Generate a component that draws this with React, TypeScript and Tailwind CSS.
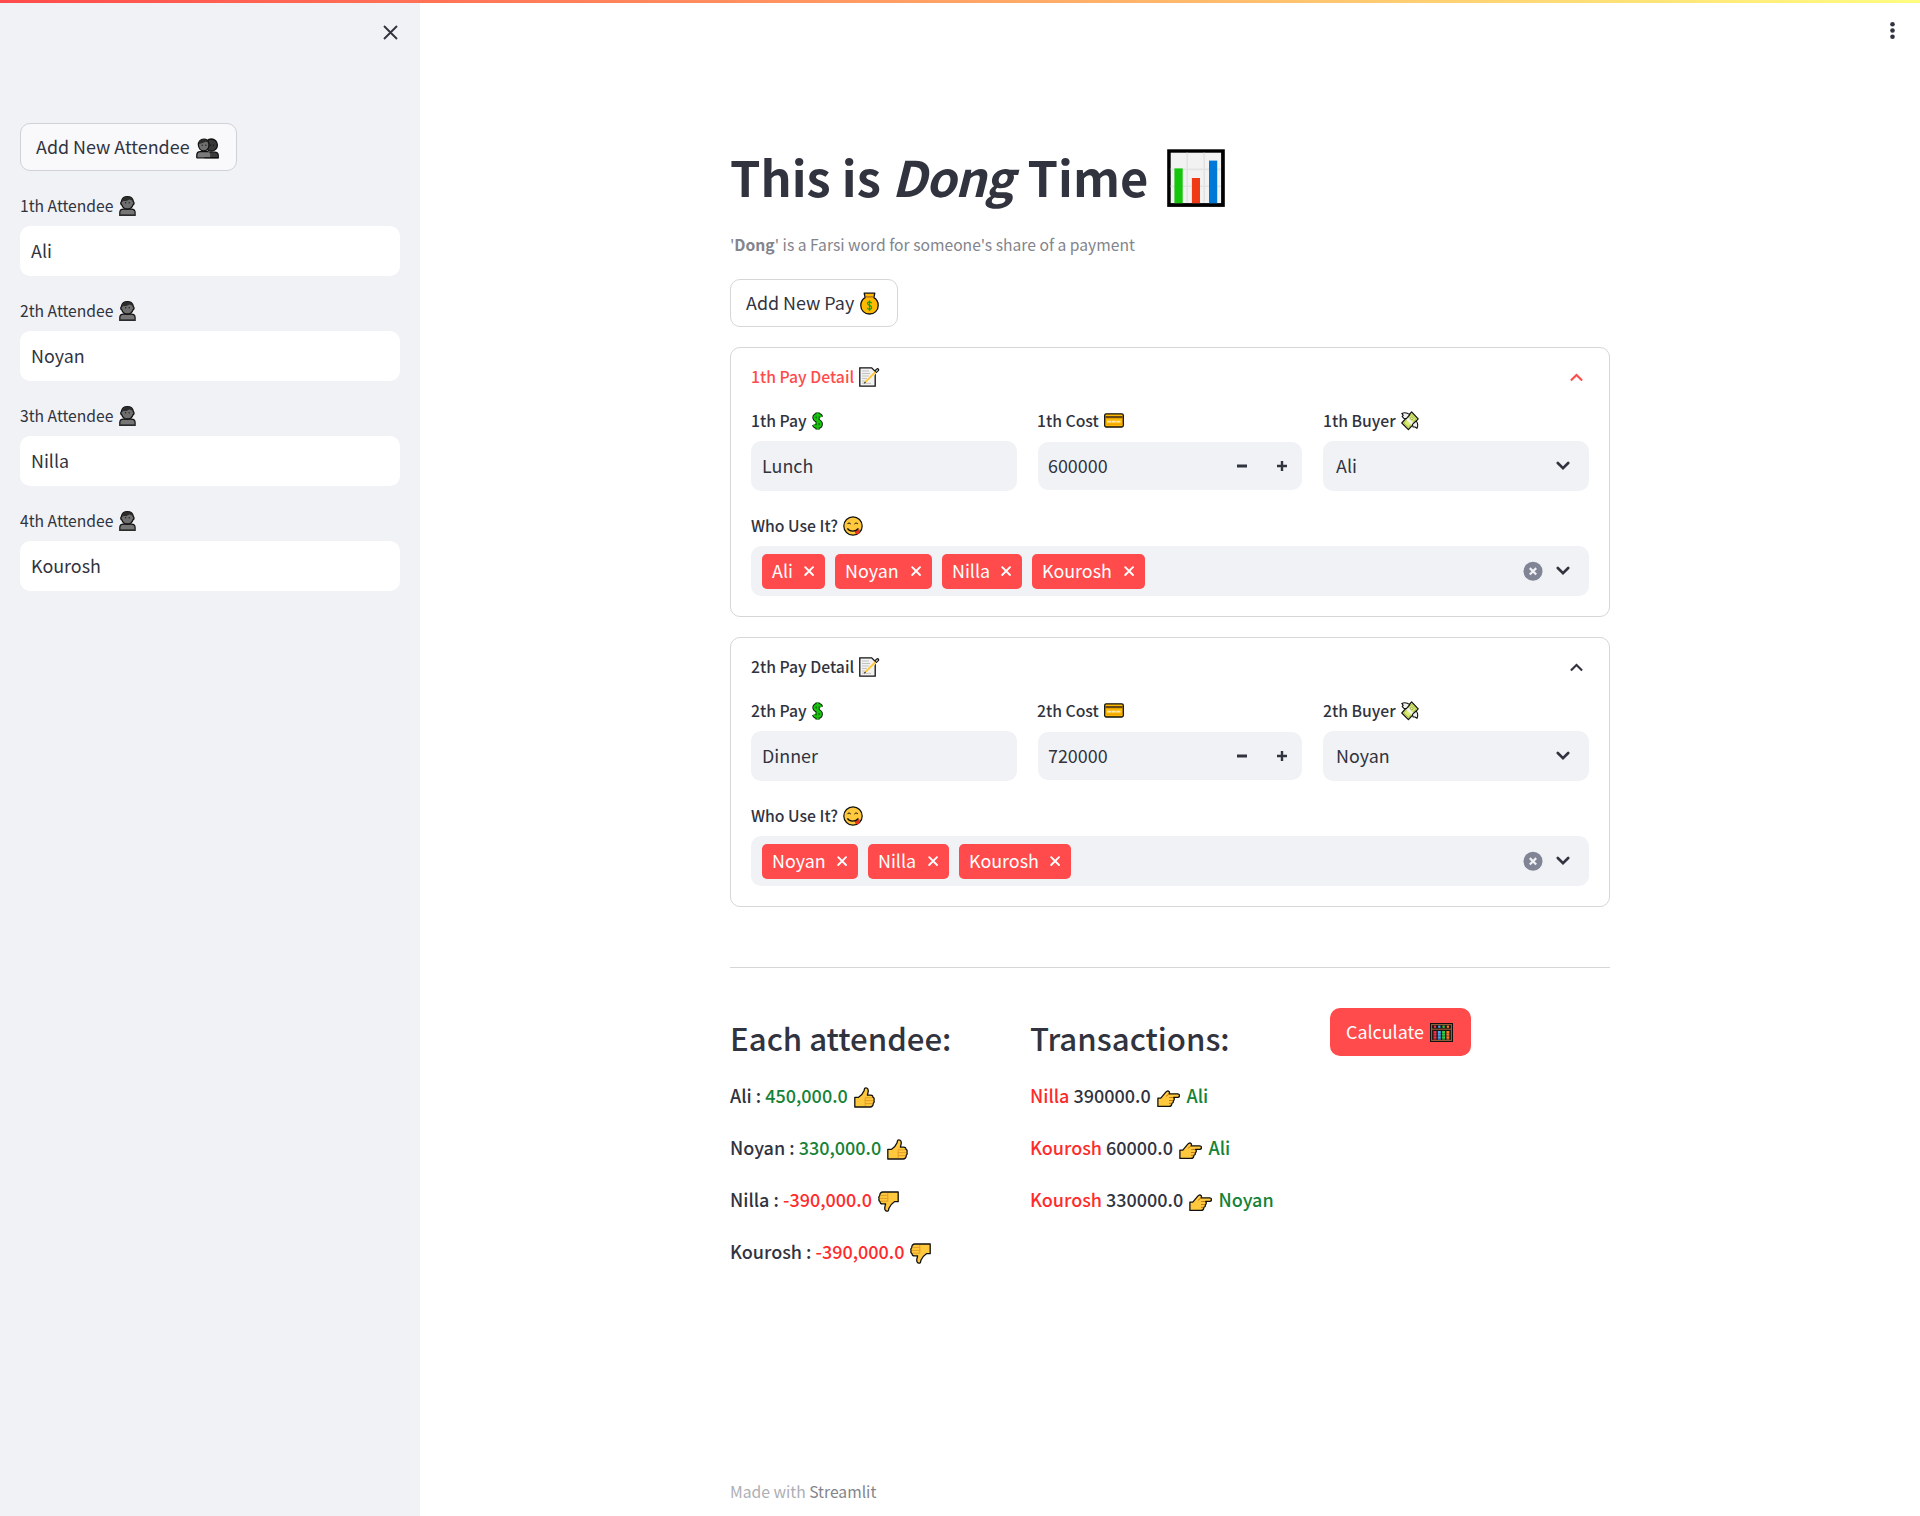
import type { ReactNode } from "react";

const CONTROL = "bg-[#f0f2f6] rounded-[10px]";

function PersonIcon() {
  return (
    <svg width="17" height="20" viewBox="0 0 17 20" className="shrink-0">
      <path d="M.8 19.4V16.4C.8 14.2 2.2 13.1 4.4 13.1H12.4C14.6 13.1 16.1 14.2 16.1 16.4V19.4Z" fill="#767676" stroke="#111" strokeWidth="1.2" />
      <path d="M1 19.1H16" stroke="#333" strokeWidth="1.4" />
      <path d="M2.4 5.6C3 2.4 5.4.7 8.4.7S13.8 2.4 14.4 5.6C15.4 6.6 15.2 8.2 14 8.9 13.2 11.4 11 13 8.4 13S3.6 11.4 2.8 8.9C1.6 8.2 1.4 6.6 2.4 5.6Z" fill="#6f6f6f" stroke="#111" strokeWidth="1.3" />
      <path d="M2.8 6C3 2.8 5 .8 8.4 .8S13.8 2.8 14 6L12.6 4.2 10.4 3.4 7.4 4.9 4.4 4.9Z" fill="#2c2c2c" />
      <circle cx="6.6" cy="6.7" r=".7" fill="#222" />
      <circle cx="10.2" cy="6.7" r=".7" fill="#222" />
    </svg>
  );
}

function PeopleIcon() {
  return (
    <svg width="23" height="21" viewBox="0 0 23 21" className="shrink-0">
      <path d="M9 19.6V14.2H18.6C21 14.2 22.3 15.5 22.3 17.4V19.6Z" fill="#3b3b3b" stroke="#111" strokeWidth="1.2" />
      <circle cx="15.3" cy="7.1" r="6.1" fill="#383838" stroke="#111" strokeWidth="1.3" />
      <path d="M.8 19.6V17.3C.8 15 2 13.8 4.2 13.8H11.4C13 13.8 14.2 15 14.2 17V19.6Z" fill="#7a7a7a" />
      <path d="M.8 20V17.3C.8 15 2 13.6 4.2 13.6H12.4M.6 19.8H22.6" fill="none" stroke="#111" strokeWidth="1.3" />
      <path d="M2.4 7C2.2 3.6 4.4 1.2 7.8 1.2S12.6 2.8 13 6.4C13.2 10.2 11 12.9 7.8 12.9S2.6 10.2 2.4 7Z" fill="#707070" stroke="#111" strokeWidth="1.3" />
      <path d="M2.8 6C3 3 5 1.2 8 1.2 10.4 1.2 12 2.5 12.7 4.8L9.4 3.8 6.8 4.9Z" fill="#2c2c2c" />
      <circle cx="6.2" cy="7.2" r=".7" fill="#222" />
      <circle cx="9.8" cy="7.2" r=".7" fill="#222" />
      <circle cx="14.6" cy="7.2" r=".6" fill="#111" />
      <circle cx="17.4" cy="7.2" r=".6" fill="#111" />
    </svg>
  );
}

function ChartIcon() {
  return (
    <svg width="58" height="58" viewBox="0 0 58 58" className="shrink-0">
      <rect x=".2" y=".3" width="57.6" height="57.6" fill="#000" />
      <rect x="3.7" y="3.7" width="50.4" height="50.4" fill="#f2f2f2" />
      <path d="M20.2 3.7V54M37.2 3.7V54M3.7 20.4H54M3.7 37.3H54" stroke="#e3e3e3" strokeWidth="1.6" />
      <rect x="7.4" y="19.4" width="8.3" height="34.8" fill="#16c60c" />
      <rect x="24.9" y="29" width="8.1" height="25.2" fill="#f03a17" />
      <rect x="42" y="11.6" width="8.2" height="42.6" fill="#0078d7" />
    </svg>
  );
}

function MoneyBagIcon() {
  return (
    <svg width="19" height="23" viewBox="0 0 19 23" className="shrink-0">
      <path d="M4.2 1.2H14.8L13.9 5.6C16.6 7.2 18.2 10 18.2 13.4 18.2 18.6 14.4 22 9.5 22S.8 18.6.8 13.4C.8 10 2.4 7.2 5.1 5.6Z" fill="#ffb900" stroke="#111" strokeWidth="1.3" strokeLinejoin="round" />
      <path d="M4.9 4.9H14.1" stroke="#8e562e" strokeWidth="1" />
      <path d="M11.6 11.2C11.2 10.3 10.5 9.9 9.6 9.9 8.4 9.9 7.5 10.5 7.5 11.6 7.5 13.9 11.6 12.9 11.6 15.5 11.6 16.7 10.7 17.3 9.5 17.3 8.3 17.3 7.6 16.8 7.3 15.9M9.5 8.4V18.9" fill="none" stroke="#10a010" strokeWidth="1.2" />
    </svg>
  );
}

function MemoIcon() {
  return (
    <svg width="21" height="20" viewBox="0 0 21 20" className="shrink-0">
      <path d="M.8.8H12.7L16.2 4.4V19.2H.8Z" fill="#f2f2f2" stroke="#111" strokeWidth="1.3" />
      <path d="M3 4H10M3 6.5H11M3 9H10M3 11.5H8M3 14H7M3 16.3H12" stroke="#bcbcbc" strokeWidth=".9" />
      <path d="M17 4.2 18.6 2.8" stroke="#111" strokeWidth="3.4" strokeLinecap="round" />
      <path d="M17.4 4 18.4 3" stroke="#bbb" strokeWidth="1.4" strokeLinecap="round" />
      <path d="M6.4 15.2 16 5.4" stroke="#fff" strokeWidth="3" />
      <path d="M6.2 15.3 16.4 5" stroke="#ffc83d" strokeWidth="2" />
      <path d="M5.2 16.3 6.6 15" stroke="#444" strokeWidth="1.2" />
    </svg>
  );
}

function DollarIcon() {
  const s = "M9 6.1C8.6 4.6 7.3 3.9 5.7 3.9 3.8 3.9 2.4 4.9 2.4 6.6 2.4 10.6 8.8 8.8 8.8 13 8.8 14.9 7.4 15.9 5.5 15.9 3.8 15.9 2.5 15.2 2 13.7M5.6 1.5V18.5";
  return (
    <svg width="12" height="20" viewBox="0 0 12 20" className="shrink-0">
      <path d={s} fill="none" stroke="#111" strokeWidth="4.2" />
      <path d={s} fill="none" stroke="#16c60c" strokeWidth="2.3" />
    </svg>
  );
}

function CardIcon() {
  return (
    <svg width="20" height="15" viewBox="0 0 20 15" className="shrink-0">
      <rect x=".7" y=".8" width="18.6" height="13.2" rx="1.5" fill="#ffb900" stroke="#111" strokeWidth="1.3" />
      <rect x="1.4" y="3" width="17.2" height="2.2" fill="#6b4a12" />
      <path d="M3 8.7H17" stroke="#ffe9b0" strokeWidth="1.8" strokeDasharray="4 .6" />
      <path d="M1.4 11.2H18.6" stroke="#e8a000" strokeWidth="1" />
    </svg>
  );
}

function WingedMoneyIcon() {
  return (
    <svg width="18" height="20" viewBox="0 0 18 20" className="shrink-0">
      <path d="M10.6.9 17.2 7.8 7.4 18.7.8 12Z" fill="#d8ea70" stroke="#111" strokeWidth="1.2" strokeLinejoin="round" />
      <path d="M10.5 3 15.2 7.8 7.5 16.4 2.9 11.9Z" fill="none" stroke="#9cb64a" strokeWidth=".8" />
      <path d="M5.2 6.5 11.9 13.4" stroke="#f4f4e6" strokeWidth="2.8" />
      <path d="M.8 2.4C3 1.4 6.4 1.8 8.8 3.6L5.4 7.6 2.6 7.2 1.2 5.4 2.2 4.4Z" fill="#f2f2f2" stroke="#111" strokeWidth="1.1" strokeLinejoin="round" />
      <path d="M11.4 13.4 15.2 10C17 12.2 17 15 16 17.4L14 16 12 16Z" fill="#f2f2f2" stroke="#111" strokeWidth="1.1" strokeLinejoin="round" />
      <circle cx="10.8" cy="7.4" r="1.3" fill="#f2f7c4" stroke="#7d962f" strokeWidth=".7" />
    </svg>
  );
}

function YumIcon() {
  return (
    <svg width="20" height="20" viewBox="0 0 20 20" className="shrink-0">
      <circle cx="10" cy="10" r="9.2" fill="#ffc83d" stroke="#111" strokeWidth="1.2" />
      <path d="M4.3 8.1C5 6.7 7 6.7 7.8 8.1M11.4 8.1C12.2 6.7 14.2 6.7 15 8.1" fill="none" stroke="#111" strokeWidth="1" />
      <path d="M11.8 15C12.8 13.8 14.8 12.8 16.6 13.4 17.1 15.6 16.4 18 14.4 18.3 12.6 18.4 11.8 17 11.8 15Z" fill="#e8351b" />
      <path d="M4.4 12.4C6.4 15.8 12.6 16.2 15.4 12.4" fill="none" stroke="#111" strokeWidth="1.2" />
    </svg>
  );
}

function ThumbIcon({ down = false }: { down?: boolean }) {
  return (
    <svg width="21" height="21" viewBox="0 0 21 21" className={down ? "shrink-0 rotate-180" : "shrink-0"}>
      <path d="M.8 20V10.3H4.6C7.2 8.6 9 6.6 10.2 3.6 10.2 1.6 10.8.8 12 .8 13.8.8 14.4 2.6 14.2 4.6L13.4 8.1H16.6C18.4 8.1 19 9.1 18.8 10.2 20 10.8 20.4 12 19.9 13.2 20.4 14.4 20.2 15.6 19.2 16.3 19.4 18.6 18 20 16 20Z" fill="#ffc83d" stroke="#111" strokeWidth="1.3" strokeLinejoin="round" />
      <path d="M11.2 10.8H18.3M10.7 13.6H19.2M11.2 16.6H18.5M11.2 10.5V19" fill="none" stroke="#e09a25" strokeWidth=".9" />
    </svg>
  );
}

function PointIcon() {
  return (
    <svg width="23" height="18" viewBox="0 0 23 18" className="shrink-0">
      <path d="M.9 16.4V8.1H3.8L8.8 2.2C9.6 1 11 .6 12 1.4 12.6 2 12.6 2.8 12.2 3.8H20.8C23 3.8 23 7.4 20.8 7.4H16.6C17.8 8.8 17.4 10.2 16.2 10.8 16.6 12.2 16 13.2 14.8 13.4 14.8 15.4 13.8 16.4 12 16.4Z" fill="#ffc83d" stroke="#111" strokeWidth="1.3" strokeLinejoin="round" />
      <path d="M12.2 3.9 9 6.4M12.2 7.5H16M12 10.5H15.8M12 13.3H14.4" stroke="#c27a12" strokeWidth="1" />
    </svg>
  );
}

function AbacusIcon() {
  return (
    <svg width="23" height="19" viewBox="0 0 23 19" className="shrink-0">
      <rect width="23" height="19" fill="#111" />
      <rect x="1.6" y="1.6" width="19.8" height="15.8" fill="#1c1410" stroke="#a0683c" strokeWidth="1" />
      <path d="M2 6.2H21" stroke="#a0683c" strokeWidth="1" />
      <g fill="none" strokeWidth="3" strokeDasharray="2.2 .4">
        <path d="M5 8V16.6" stroke="#f0304a" />
        <path d="M9.3 8V16.6" stroke="#45a8f5" />
        <path d="M13.6 8V16.6" stroke="#2fd040" />
        <path d="M17.9 8V16.6" stroke="#ff7a28" />
      </g>
      <g strokeWidth="2.2">
        <path d="M5 2.6V4.8" stroke="#f0304a" />
        <path d="M9.3 2.6V4.8" stroke="#45a8f5" />
        <path d="M13.6 2.6V4.8" stroke="#2fd040" />
        <path d="M17.9 2.6V4.8" stroke="#ff7a28" />
      </g>
    </svg>
  );
}

function Chevron({ up = false }: { up?: boolean }) {
  return up ? (
    <svg width="14" height="9" viewBox="0 0 14 9" className="shrink-0">
      <path d="M1.9 7.6 7.5 2 13.1 7.6" fill="none" stroke="currentColor" strokeWidth="2.1" />
    </svg>
  ) : (
    <svg width="14" height="10" viewBox="0 0 14 10" className="shrink-0">
      <path d="M1.8 2 7 7.2 12.2 2" fill="none" stroke="#31333f" strokeWidth="2.6" strokeLinecap="round" />
    </svg>
  );
}

function Attendee({ n, name }: { n: number; name: string }) {
  return (
    <div className="mb-[21px] flex flex-col">
      <div className="mb-[7px] flex h-[27px] items-center text-[15.67px]">
        <span className="w-[99px] whitespace-nowrap">{n}th Attendee</span>
        <span className="mt-px"><PersonIcon /></span>
      </div>
      <div className="flex h-[50px] items-center rounded-[10px] bg-white px-[11px]">{name}</div>
    </div>
  );
}

function FieldLabel({ text, width, icon }: { text: string; width: string; icon: ReactNode }) {
  return (
    <div className="mb-[7px] flex h-[27px] items-center text-[15.75px] font-medium">
      <span className={`${width} whitespace-nowrap`}>{text}</span>
      {icon}
    </div>
  );
}

type Person = { name: string; width: string };
type Pay = { n: number; item: string; cost: string; buyer: string; users: Person[]; active?: boolean };

function PayCard({ n, item, cost, buyer, users, active }: Pay) {
  return (
    <section className="mb-5 flex h-[270px] flex-col rounded-[10px] border border-[#d6d6d9] px-5 pt-[15px]">
      <div className={`mb-[17px] flex h-[27px] items-center text-[15.75px] font-medium ${active ? "text-[#ff4b4b]" : ""}`}>
        <span className="w-[108px] whitespace-nowrap">{n}th Pay Detail</span>
        <MemoIcon />
        <span className="ml-auto mr-[6px] mt-0.5"><Chevron up /></span>
      </div>
      <div className="mb-[21px] grid grid-cols-3 gap-5">
        <div>
          <FieldLabel text={`${n}th Pay`} width="w-[61px]" icon={<DollarIcon />} />
          <div className={`${CONTROL} flex h-[50px] items-center px-[11px]`}>{item}</div>
        </div>
        <div>
          <FieldLabel text={`${n}th Cost`} width="w-[67px]" icon={<CardIcon />} />
          <div className={`${CONTROL} mx-px mt-2 flex h-12 items-center pl-[10px] pr-3.5`}>
            <span className="grow">{cost}</span>
            <svg width="12" height="12" viewBox="0 0 12 12" className="mr-7">
              <path d="M1 6H11" stroke="#31333f" strokeWidth="3" />
            </svg>
            <svg width="12" height="12" viewBox="0 0 12 12">
              <path d="M1 6H11M6 1V11" stroke="#31333f" strokeWidth="2.4" />
            </svg>
          </div>
        </div>
        <div>
          <FieldLabel text={`${n}th Buyer`} width="w-[78px]" icon={<WingedMoneyIcon />} />
          <div className={`${CONTROL} flex h-[50px] items-center justify-between pl-[13px] pr-[19px]`}>
            {buyer}
            <Chevron />
          </div>
        </div>
      </div>
      <FieldLabel text="Who Use It?" width="w-[92px]" icon={<YumIcon />} />
      <div className={`${CONTROL} flex h-[50px] items-center pl-[11px] pr-[19px]`}>
        <div className="flex grow gap-2.5">
          {users.map((u) => (
            <span key={u.name} className={`${u.width} flex h-[35px] items-center justify-between rounded-[5px] bg-[#ff4b4b] px-2.5 text-white`}>
              {u.name}
              <svg width="12" height="12" viewBox="0 0 12 12">
                <path d="M2.2 2.2 10 10M10 2.2 2.2 10" stroke="white" strokeWidth="1.9" strokeLinecap="round" />
              </svg>
            </span>
          ))}
        </div>
        <svg width="20" height="20" viewBox="0 0 20 20" className="mr-[13px]">
          <circle cx="10" cy="10.3" r="9.5" fill="#808495" />
          <path d="M6.8 7.1 13.2 13.5M13.2 7.1 6.8 13.5" stroke="#f0f2f6" strokeWidth="2.2" />
        </svg>
        <Chevron />
      </div>
    </section>
  );
}

const pays: Pay[] = [
  {
    n: 1, item: "Lunch", cost: "600000", buyer: "Ali", active: true,
    users: [
      { name: "Ali", width: "w-[63px]" },
      { name: "Noyan", width: "w-[97px]" },
      { name: "Nilla", width: "w-[80px]" },
      { name: "Kourosh", width: "w-[113px]" },
    ],
  },
  {
    n: 2, item: "Dinner", cost: "720000", buyer: "Noyan",
    users: [
      { name: "Noyan", width: "w-[96px]" },
      { name: "Nilla", width: "w-[81px]" },
      { name: "Kourosh", width: "w-[112px]" },
    ],
  },
];

const balances = [
  { name: "Ali", amount: "450,000.0", width: "w-[124px]" },
  { name: "Noyan", amount: "330,000.0", width: "w-[157px]" },
  { name: "Nilla", amount: "-390,000.0", width: "w-[148px]" },
  { name: "Kourosh", amount: "-390,000.0", width: "w-[180px]" },
];

const transfers = [
  { from: "Nilla", amount: "390000.0", to: "Ali", width: "w-[127px]" },
  { from: "Kourosh", amount: "60000.0", to: "Ali", width: "w-[149px]" },
  { from: "Kourosh", amount: "330000.0", to: "Noyan", width: "w-[159px]" },
];

export default function App() {
  return (
    <div className="flex h-[1516px] w-[1920px] flex-col overflow-hidden bg-white font-['Noto_Sans_CJK_SC',sans-serif] text-[17.9px] leading-none text-[#31333f]">
      <div className="h-[3px] shrink-0 bg-linear-[90deg,#ff4b4b,#fffd80]" />
      <div className="flex min-h-0 grow">
        <aside className="flex w-[420px] shrink-0 flex-col bg-[#f0f2f6] px-5">
          <div className="flex h-[120px] justify-end pr-[2px] pt-[22px]">
            <svg width="15" height="15" viewBox="0 0 15 15">
              <path d="M1 1 14 14M14 1 1 14" stroke="#31333f" strokeWidth="1.9" />
            </svg>
          </div>
          <button className="mb-[21px] flex h-12 w-[217px] items-center rounded-[10px] border border-[#d0d1d6] bg-[#f9f9fb] pl-[15px]">
            <span className="w-40 whitespace-nowrap text-left">Add New Attendee</span>
            <span className="mt-0.5"><PeopleIcon /></span>
          </button>
          <Attendee n={1} name="Ali" />
          <Attendee n={2} name="Noyan" />
          <Attendee n={3} name="Nilla" />
          <Attendee n={4} name="Kourosh" />
        </aside>
        <div className="flex grow">
          <main className="ml-[310px] flex w-[880px] shrink-0 flex-col">
            <h1 className="mt-[140px] flex h-[66px] items-center text-[48.8px] font-bold">
              <span className="w-[437px] whitespace-nowrap">This is <em className="mr-[4px] tracking-[-1.3px]">Dong</em> Time</span>
              <span className="mt-1"><ChartIcon /></span>
            </h1>
            <p className="mt-[22px] flex h-[28px] items-center text-[15.67px] text-[#83848c]">
              <span className="whitespace-nowrap">'<b>Dong</b>' is a Farsi word for someone's share of a payment</span>
            </p>
            <button className="mb-5 mt-5 flex h-12 w-[168px] items-center rounded-[10px] border border-[#d6d6d9] bg-white pl-[15px]">
              <span className="w-[114px] whitespace-nowrap text-left">Add New Pay</span>
              <MoneyBagIcon />
            </button>
            {pays.map((p) => <PayCard key={p.n} {...p} />)}
            <hr className="mt-10 border-[#d6d6d9]" />
            <div className="mt-10 flex">
              <div className="w-[300px]">
                <h2 className="mt-2.5 flex h-[39px] items-center whitespace-nowrap text-[31.2px] font-medium">Each attendee:</h2>
                {balances.map((b) => {
                  const owes = b.amount.startsWith("-");
                  return (
                    <div key={b.name} className="mb-[22px] flex h-[30px] items-center text-[18px] font-medium first-of-type:mt-[23px]">
                      <span className={`${b.width} whitespace-nowrap`}>
                        {b.name} : <span className={owes ? "text-[#ff2b2b]" : "text-[#158237]"}>{b.amount}</span>
                      </span>
                      <span className="mt-1"><ThumbIcon down={owes} /></span>
                    </div>
                  );
                })}
              </div>
              <div className="w-[300px]">
                <h2 className="mt-2.5 flex h-[39px] items-center whitespace-nowrap text-[31.2px] font-medium">Transactions:</h2>
                {transfers.map((t) => (
                  <div key={t.from + t.amount} className="mb-[22px] flex h-[30px] items-center text-[18px] font-medium first-of-type:mt-[23px]">
                    <span className={`${t.width} whitespace-nowrap`}>
                      <span className="text-[#ff2b2b]">{t.from}</span> {t.amount}
                    </span>
                    <span className="mr-[6.5px] mt-2"><PointIcon /></span>
                    <span className="text-[#158237]">{t.to}</span>
                  </div>
                ))}
              </div>
              <button className="flex h-12 w-[141px] items-center rounded-[10px] bg-[#ff4b4b] pl-4 text-white">
                <span className="w-[84px] text-left">Calculate</span>
                <AbacusIcon />
              </button>
            </div>
            <footer className="mb-2.5 mt-auto flex h-[28px] items-center text-[15.67px] text-[#adaeb3]">
              <span>Made with <span className="text-[#83848c]">Streamlit</span></span>
            </footer>
          </main>
          <svg width="6" height="19" viewBox="0 0 6 19" className="ml-auto mr-[25px] mt-[18px]">
            <g fill="#31333f">
              <circle cx="3.5" cy="3.2" r="2.3" />
              <circle cx="3.5" cy="9.5" r="2.3" />
              <circle cx="3.5" cy="15.8" r="2.3" />
            </g>
          </svg>
        </div>
      </div>
    </div>
  );
}
